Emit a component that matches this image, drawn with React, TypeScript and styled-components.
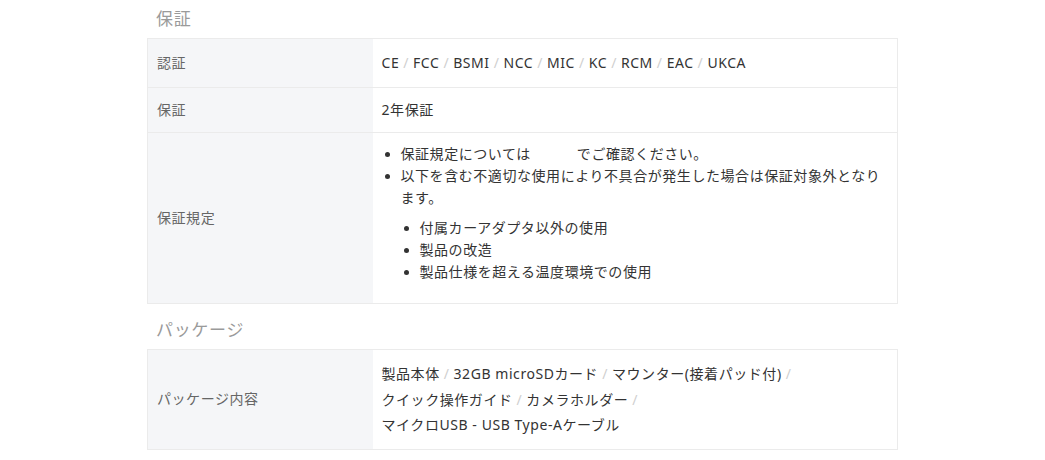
import React from "react";
import styled, { createGlobalStyle } from "styled-components";

const Global = createGlobalStyle`
  html, body { margin: 0; padding: 0; background: #fff; }
  body { font-family: "Noto Sans", "Noto Sans CJK JP", sans-serif; color: #333; }
`;

const Page = styled.div`
  width: 751px;
  margin: 0 auto;
`;

const SectionTitle = styled.h3<{ $first?: boolean }>`
  margin: ${(p) => (p.$first ? "1px" : "8px")} 0 1px;
  padding-left: 9px;
  font-size: 17px;
  letter-spacing: 0.04em;
  font-weight: 400;
  line-height: 36px;
  color: #9a9a9a;
`;

const Table = styled.table`
  width: 100%;
  table-layout: fixed;
  border-collapse: collapse;
  border: 1px solid #ebebeb;
  font-size: 14px;
  letter-spacing: 0.04em;
`;

const LabelCol = styled.col`
  width: 225px;
`;

const Row = styled.tr`
  border-top: 1px solid #ebebeb;
`;

const Label = styled.th<{ $pad: number }>`
  background: #f5f6f8;
  color: #666;
  font-weight: 400;
  text-align: left;
  vertical-align: middle;
  padding: ${(p) => p.$pad}px 9px;
  line-height: 22px;
`;

const Value = styled.td<{ $pad: string; $lh?: number }>`
  padding: ${(p) => p.$pad};
  line-height: ${(p) => p.$lh ?? 22}px;
  color: #333;
  vertical-align: middle;
`;

const Sep = styled.span`
  color: #cfcfcf;
  margin: 0 4px;
`;

const List = styled.ul<{ $nested?: boolean }>`
  margin: ${(p) => (p.$nested ? "8px 0 0" : "0")};
  padding-left: 19px;
  list-style: disc;
  li::marker { font-size: 13px; }
`;

const Gap = styled.span`
  display: inline-block;
  width: 46px;
`;

const SlashList = ({ items }: { items: string[] }) => (
  <>
    {items.map((t, i) => (
      <React.Fragment key={i}>
        {i > 0 && <Sep>/</Sep>}
        {t}
      </React.Fragment>
    ))}
  </>
);

const Cols = () => (
  <colgroup>
    <LabelCol />
    <col />
  </colgroup>
);

export default function App() {
  return (
    <Page>
      <Global />
      <SectionTitle $first>保証</SectionTitle>
      <Table>
        <Cols />
        <tbody>
          <Row>
            <Label $pad={13}>認証</Label>
            <Value $pad="13px 9px">
              <SlashList items={["CE", "FCC", "BSMI", "NCC", "MIC", "KC", "RCM", "EAC", "UKCA"]} />
            </Value>
          </Row>
          <Row>
            <Label $pad={11}>保証</Label>
            <Value $pad="11px 9px">2年保証</Value>
          </Row>
          <Row>
            <Label $pad={10}>保証規定</Label>
            <Value $pad="10px 12px 20px 9px">
              <List>
                <li>
                  保証規定については<Gap />でご確認ください。
                </li>
                <li>
                  以下を含む不適切な使用により不具合が発生した場合は保証対象外となります。
                  <List $nested>
                    <li>付属カーアダプタ以外の使用</li>
                    <li>製品の改造</li>
                    <li>製品仕様を超える温度環境での使用</li>
                  </List>
                </li>
              </List>
            </Value>
          </Row>
        </tbody>
      </Table>
      <SectionTitle>パッケージ</SectionTitle>
      <Table>
        <Cols />
        <tbody>
          <Row>
            <Label $pad={12}>パッケージ内容</Label>
            <Value $pad="11px 9px 11px" $lh={25.5}>
              製品本体<Sep>/</Sep>32GB microSDカード<Sep>/</Sep>マウンター(接着パッド付)<Sep>/</Sep>
              <br />
              クイック操作ガイド<Sep>/</Sep>カメラホルダー<Sep>/</Sep>
              <br />
              マイクロUSB - USB Type-Aケーブル
            </Value>
          </Row>
        </tbody>
      </Table>
    </Page>
  );
}
